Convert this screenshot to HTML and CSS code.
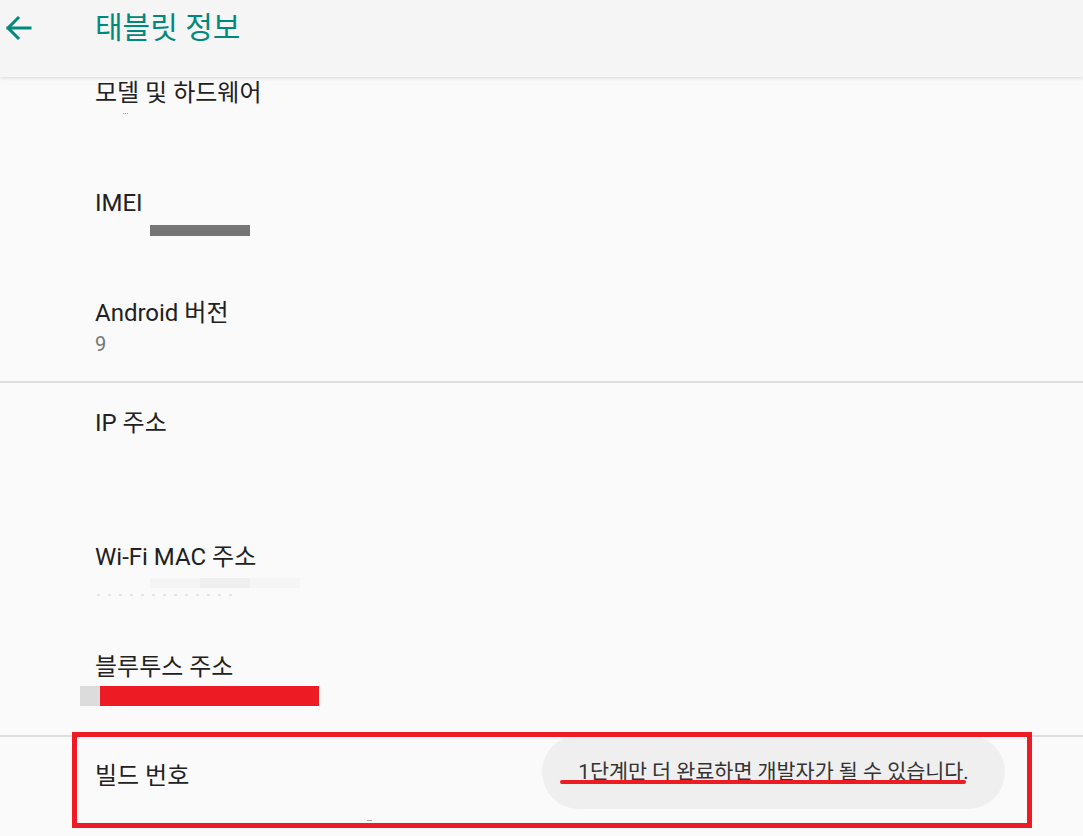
FILE: index.html
```html
<!DOCTYPE html>
<html lang="ko">
<head>
<meta charset="utf-8">
<title>태블릿 정보</title>
<link rel="stylesheet" href="styles.css">
</head>
<body>
<header class="appbar">
  <svg class="back" width="30" height="28" viewBox="0 0 30 28" aria-hidden="true">
    <path d="M27 14H5M15 4L5 14L15 24" fill="none" stroke="#00897b" stroke-width="3" stroke-linecap="square"/>
  </svg>
  <h1 class="appbar-title">태블릿 정보</h1>
</header>
<main class="list">
  <div class="item item-first">
    <div class="title">모델 및 하드웨어</div>
    <div class="specks"></div>
  </div>
  <div class="item">
    <div class="title">IMEI</div>
    <div class="sum-row"><span class="bar bar-imei"></span></div>
  </div>
  <div class="item item-android">
    <div class="title">Android 버전</div>
    <div class="summary">9</div>
  </div>
  <div class="divider"></div>
  <div class="item item-ip section-start">
    <div class="title">IP 주소</div>
  </div>
  <div class="item item-wifi">
    <div class="title">Wi-Fi MAC 주소</div>
    <div class="sum-row wifi-bars"><span class="bar wb1"></span><span class="bar wb2"></span><span class="bar wb3"></span></div>
    <div class="dots"></div>
  </div>
  <div class="item item-bt">
    <div class="title">블루투스 주소</div>
    <div class="sum-row bt-row"><span class="bar bt-gray"></span><span class="bar bt-red"></span></div>
  </div>
  <div class="divider"></div>
  <div class="item item-build section-start">
    <div class="title">빌드 번호</div>
    <div class="toast"><span class="toast-text">1단계만 더 완료하면 개발자가 될 수 있습니다.</span><span class="underline"></span></div>
    <div class="highlight"></div>
    <span class="tick"></span>
  </div>
</main>
</body>
</html>
```
FILE: styles.css
```css
* { box-sizing: border-box; }
html, body { margin: 0; padding: 0; }
body {
  width: 1083px;
  height: 836px;
  overflow: hidden;
  background: #fafafa;
  font-family: Roboto, "Noto Sans CJK KR", sans-serif;
  color: #212121;
}
.appbar {
  position: relative;
  z-index: 2;
  height: 77px;
  background: #f5f5f5;
  display: flex;
  align-items: flex-start;
  box-shadow: 0 1px 4px rgba(0,0,0,0.14);
}
.back { margin: 14px 0 0 3px; flex: none; }
.appbar-title {
  margin: 8px 0 0 62px;
  font-size: 30px;
  font-weight: 400;
  line-height: 40px;
  color: #00897b;
}
.list { display: flex; flex-direction: column; }
.item {
  position: relative;
  padding: 21px 0 0 95px;
  height: 110px;
}
.title { font-size: 24px; line-height: 32px; height: 32px; }
.item-first { padding-top: 0; height: 89px; }
.specks {
  margin: 4px 0 0 28px;
  width: 5px; height: 1px;
  border-top: 1px dotted #999;
}
.sum-row { display: flex; height: 22px; align-items: center; }
.bar { display: block; }
.bar-imei { margin-left: 55px; width: 100px; height: 11px; background: #757575; }
.item-android { height: 105px; }
.summary { margin-top: 2px; font-size: 20px; line-height: 26px; color: #757575; }
.divider { height: 2px; background: #dedede; }
.section-start { padding-top: 24px; }
.item-ip { height: 137px; padding-top: 24px; }
.item-wifi .wifi-bars { height: 12px; margin-top: 4px; }
.wb1 { margin-left: 55px; width: 50px; height: 10px; background: #f4f4f4; }
.wb2 { width: 50px; height: 10px; background: #efefef; }
.wb3 { width: 50px; height: 10px; background: #f5f5f5; }
.dots {
  margin: 5px 0 0 2px;
  width: 136px; height: 2px;
  background: repeating-linear-gradient(90deg, #e4e4e4 0 3px, transparent 3px 11px);
}
.item-bt { height: 105px; }
.bt-row { margin: 3px 0 0 -15px; height: 20px; }
.bt-gray { width: 20px; height: 20px; background: #dcdcdc; }
.bt-red { width: 219px; height: 20px; background: #ed1c24; }
.item-build { height: 99px; padding-top: 23px; }
.toast {
  position: absolute;
  left: 542px; top: -2px;
  width: 463px; height: 74px;
  border-radius: 37px;
  background: #efefef;
  display: flex; align-items: center; justify-content: center;
}
.toast-text { font-size: 20.7px; color: #333; line-height: 28px; }
.underline {
  position: absolute;
  left: 18px; top: 45px;
  width: 406px; height: 4px;
  border-radius: 2px;
  background: #ed1c24;
}
.highlight {
  position: absolute;
  left: 72px; top: -5px;
  width: 960px; height: 96px;
  border: 5px solid #ed1c24;
}
.tick {
  position: absolute;
  left: 367px; top: 83px;
  width: 5px; height: 1px;
  background: #aaa;
}
```
